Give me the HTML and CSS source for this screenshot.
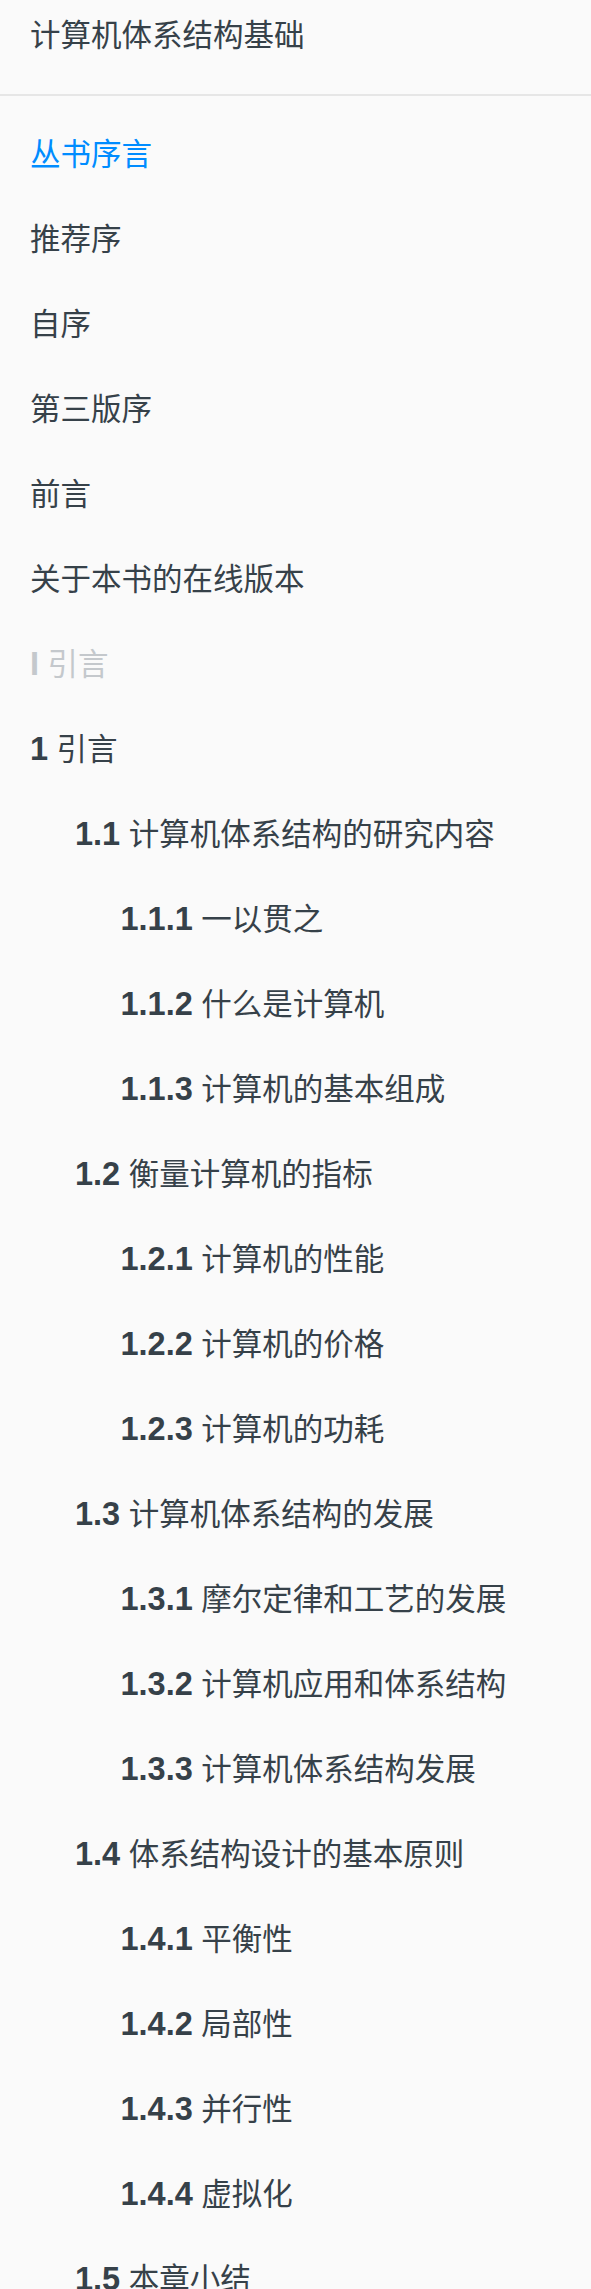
FILE: index.html
```html
<!DOCTYPE html>
<html lang="zh-CN">
<head>
<meta charset="utf-8">
<title>计算机体系结构基础</title>
<link rel="stylesheet" href="styles.css">
</head>
<body>
<nav class="summary">
  <div class="book-title">计算机体系结构基础</div>
  <ul class="toc">
    <li class="item lv0 active"><a>丛书序言</a></li>
    <li class="item lv0"><a>推荐序</a></li>
    <li class="item lv0"><a>自序</a></li>
    <li class="item lv0"><a>第三版序</a></li>
    <li class="item lv0"><a>前言</a></li>
    <li class="item lv0"><a>关于本书的在线版本</a></li>
    <li class="item lv0 part"><a><b>I</b> 引言</a></li>
    <li class="item lv0"><a><b>1</b> 引言</a></li>
    <li class="item lv1"><a><b>1.1</b> 计算机体系结构的研究内容</a></li>
    <li class="item lv2"><a><b>1.1.1</b> 一以贯之</a></li>
    <li class="item lv2"><a><b>1.1.2</b> 什么是计算机</a></li>
    <li class="item lv2"><a><b>1.1.3</b> 计算机的基本组成</a></li>
    <li class="item lv1"><a><b>1.2</b> 衡量计算机的指标</a></li>
    <li class="item lv2"><a><b>1.2.1</b> 计算机的性能</a></li>
    <li class="item lv2"><a><b>1.2.2</b> 计算机的价格</a></li>
    <li class="item lv2"><a><b>1.2.3</b> 计算机的功耗</a></li>
    <li class="item lv1"><a><b>1.3</b> 计算机体系结构的发展</a></li>
    <li class="item lv2"><a><b>1.3.1</b> 摩尔定律和工艺的发展</a></li>
    <li class="item lv2"><a><b>1.3.2</b> 计算机应用和体系结构</a></li>
    <li class="item lv2"><a><b>1.3.3</b> 计算机体系结构发展</a></li>
    <li class="item lv1"><a><b>1.4</b> 体系结构设计的基本原则</a></li>
    <li class="item lv2"><a><b>1.4.1</b> 平衡性</a></li>
    <li class="item lv2"><a><b>1.4.2</b> 局部性</a></li>
    <li class="item lv2"><a><b>1.4.3</b> 并行性</a></li>
    <li class="item lv2"><a><b>1.4.4</b> 虚拟化</a></li>
    <li class="item lv1"><a><b>1.5</b> 本章小结</a></li>
  </ul>
</nav>
</body>
</html>
```
FILE: styles.css
```css
html, body {
  margin: 0;
  padding: 0;
  background: #fafafa;
}
body {
  font-family: "Liberation Sans", "Noto Sans CJK SC", sans-serif;
  font-size: 30.5px;
  color: #364149;
}
.summary {
  display: flex;
  flex-direction: column;
}
.book-title {
  line-height: 30px;
  padding: 20px 30px 44px;
  border-bottom: 2px solid #e6e6e6;
}
.toc {
  list-style: none;
  margin: 0;
  padding: 15px 0 0;
}
.item a {
  display: block;
  height: 30px;
  line-height: 30px;
  padding: 27.5px 20px 27.5px 30px;
  white-space: nowrap;
}
.item b {
  font-weight: bold;
  font-size: 32.5px;
  line-height: 0;
}
.lv1 a { padding-left: 75px; }
.lv2 a { padding-left: 120.5px; }
.active a { color: #008cff; }
.part a { color: #c4c8cc; }
```
